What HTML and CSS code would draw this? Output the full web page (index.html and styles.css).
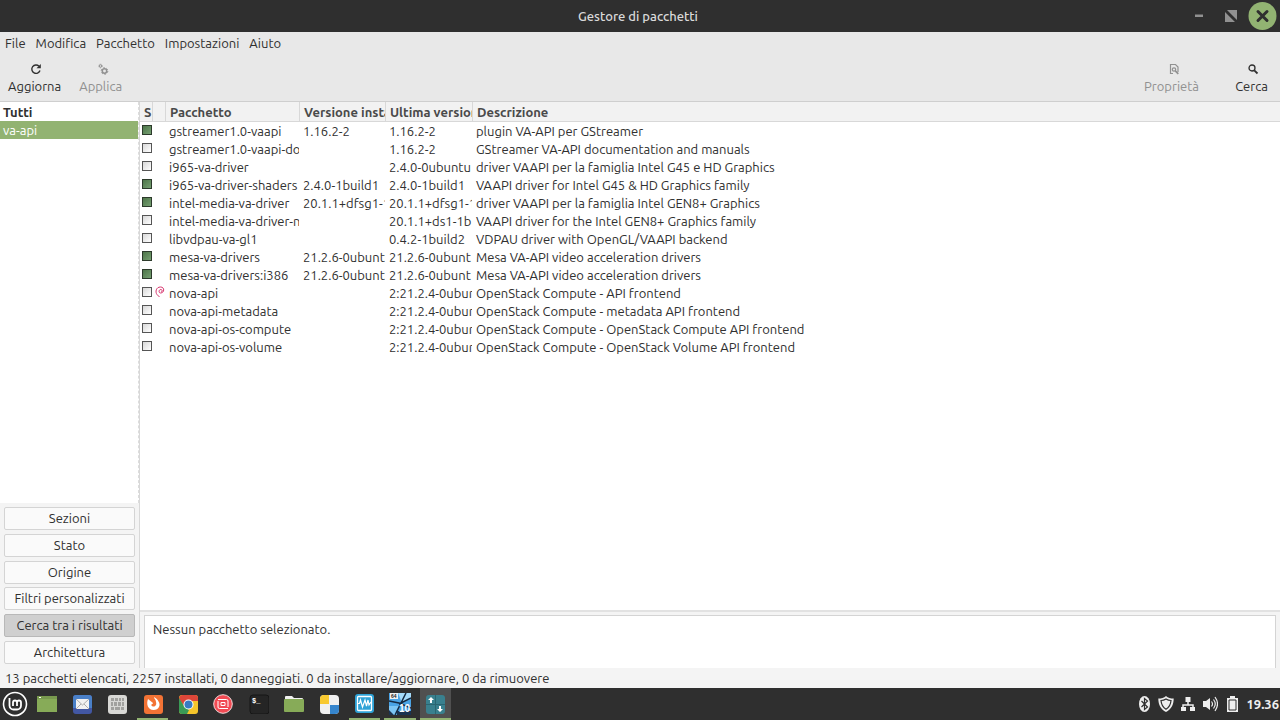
FILE: index.html
```html
<!DOCTYPE html>
<html lang="it">
<head>
    <meta charset="UTF-8">
    <meta name="viewport" content="width=device-width, initial-scale=1.0">
    <title>Gestore di pacchetti</title>
    <link rel="stylesheet" href="styles.css">
</head>
<body>

<header class="titlebar">
    <h1>Gestore di pacchetti</h1>
    <div class="window-buttons">
        <button aria-label="Minimizza"><svg width="32" height="32" viewBox="0 0 32 32"><path d="M11 14.500h8v2.500h-8z" fill="#919191"/></svg></button>
        <button aria-label="Massimizza"><svg width="32" height="32" viewBox="0 0 32 32"><path d="M11 10h10v10zM9 12l10 10H9z" fill="#919191"/></svg></button>
        <button aria-label="Chiudi"><svg width="32" height="32" viewBox="0 0 32 32"><circle cx="14.500" cy="16" r="14" fill="#92b372"/><path d="M10 11.500l9 9m0-9l-9 9" stroke="#2f2f2f" stroke-width="3" stroke-linecap="round"/></svg></button>
    </div>
</header>

<nav class="menubar">
    <button>File</button>
    <button>Modifica</button>
    <button>Pacchetto</button>
    <button>Impostazioni</button>
    <button>Aiuto</button>
</nav>

<div class="toolbar">
    <button>
        <svg width="16" height="16" viewBox="-1 0 16 16"><path d="M12 9.500A4.200 4.200 0 1 1 11 5.200" fill="none" stroke="#303030" stroke-width="1.400"/><path d="M12.800 3v4.300H8.500z" fill="#303030"/></svg>
        Aggiorna
    </button>
    <button disabled>
        <svg width="16" height="16" viewBox="-2 0 16 16" fill="none" stroke="#919191"><circle cx="9.500" cy="10" r="2.200" stroke-width="1.500"/><circle cx="9.500" cy="10" r="3.300" stroke-width="1" stroke-dasharray="1.700 1.750"/><circle cx="5.500" cy="5" r="1.200" stroke-width="1"/><circle cx="5.500" cy="5" r="1.900" stroke-width=".7" stroke-dasharray="1 1"/></svg>
        Applica
    </button>
    <span class="spacer"></span>
    <button class="properties" disabled>
        <svg width="16" height="16" viewBox="-2 0 16 16" fill="none" stroke="#919191" stroke-width="1.200"><path d="M7 12.500H4.500v-9h5l2.500 2.500v5"/><circle cx="8" cy="8.500" r="1.700"/><path d="M9.300 9.800l3 3" stroke-width="1.700"/></svg>
        Proprietà
    </button>
    <button>
        <svg width="16" height="16" viewBox="-1 0 16 16" fill="none" stroke="#303030"><circle cx="7" cy="7" r="3" stroke-width="1.300"/><path d="M9.300 9.300l3.200 3.200" stroke-width="1.800"/></svg>
        Cerca
    </button>
</div>

<main class="content">
    <aside class="sidebar">
        <ul class="filters">
            <li class="all">Tutti</li>
            <li class="selected">va-api</li>
        </ul>
        <div class="views">
            <button>Sezioni</button>
            <button>Stato</button>
            <button>Origine</button>
            <button>Filtri personalizzati</button>
            <button class="active">Cerca tra i risultati</button>
            <button>Architettura</button>
        </div>
    </aside>

    <section class="packages">
        <div class="list">
            <table>
                <colgroup>
                    <col class="col-status">
                    <col class="col-status">
                    <col class="col-name">
                    <col class="col-installed">
                    <col class="col-latest">
                    <col>
                </colgroup>
                <thead>
                    <tr><th>S</th><th></th><th>Pacchetto</th><th>Versione installata</th><th>Ultima versione</th><th>Descrizione</th></tr>
                </thead>
                <tbody>
                    <tr><td><input type="checkbox" aria-label="gstreamer1.0-vaapi" checked></td><td></td><td>gstreamer1.0-vaapi</td><td>1.16.2-2</td><td>1.16.2-2</td><td>plugin VA-API per GStreamer</td></tr>
                    <tr><td><input type="checkbox" aria-label="gstreamer1.0-vaapi-doc"></td><td></td><td>gstreamer1.0-vaapi-do</td><td></td><td>1.16.2-2</td><td>GStreamer VA-API documentation and manuals</td></tr>
                    <tr><td><input type="checkbox" aria-label="i965-va-driver"></td><td></td><td>i965-va-driver</td><td></td><td>2.4.0-0ubuntu</td><td>driver VAAPI per la famiglia Intel G45 e HD Graphics</td></tr>
                    <tr><td><input type="checkbox" aria-label="i965-va-driver-shaders" checked></td><td></td><td>i965-va-driver-shaders</td><td>2.4.0-1build1</td><td>2.4.0-1build1</td><td>VAAPI driver for Intel G45 &amp; HD Graphics family</td></tr>
                    <tr><td><input type="checkbox" aria-label="intel-media-va-driver" checked></td><td></td><td>intel-media-va-driver</td><td>20.1.1+dfsg1-1</td><td>20.1.1+dfsg1-1</td><td>driver VAAPI per la famiglia Intel GEN8+ Graphics</td></tr>
                    <tr><td><input type="checkbox" aria-label="intel-media-va-driver-non-free"></td><td></td><td>intel-media-va-driver-n</td><td></td><td>20.1.1+ds1-1b</td><td>VAAPI driver for the Intel GEN8+ Graphics family</td></tr>
                    <tr><td><input type="checkbox" aria-label="libvdpau-va-gl1"></td><td></td><td>libvdpau-va-gl1</td><td></td><td>0.4.2-1build2</td><td>VDPAU driver with OpenGL/VAAPI backend</td></tr>
                    <tr><td><input type="checkbox" aria-label="mesa-va-drivers" checked></td><td></td><td>mesa-va-drivers</td><td>21.2.6-0ubunt</td><td>21.2.6-0ubunt</td><td>Mesa VA-API video acceleration drivers</td></tr>
                    <tr><td><input type="checkbox" aria-label="mesa-va-drivers:i386" checked></td><td></td><td>mesa-va-drivers:i386</td><td>21.2.6-0ubunt</td><td>21.2.6-0ubunt</td><td>Mesa VA-API video acceleration drivers</td></tr>
                    <tr><td><input type="checkbox" aria-label="nova-api"></td><td><svg width="10" height="12" viewBox="0 0 10 12"><path d="M5.500 7C3.500 7 3.600 3.600 5.800 3.500 7.600 3.500 7.500 6 6 6M5.500 7C9.500 7 10 1 5.500 1 1 1 0 6 2 8.500L4.500 11" fill="none" stroke="#d8366f"/></svg></td><td>nova-api</td><td></td><td>2:21.2.4-0ubun</td><td>OpenStack Compute - API frontend</td></tr>
                    <tr><td><input type="checkbox" aria-label="nova-api-metadata"></td><td></td><td>nova-api-metadata</td><td></td><td>2:21.2.4-0ubun</td><td>OpenStack Compute - metadata API frontend</td></tr>
                    <tr><td><input type="checkbox" aria-label="nova-api-os-compute"></td><td></td><td>nova-api-os-compute</td><td></td><td>2:21.2.4-0ubun</td><td>OpenStack Compute - OpenStack Compute API frontend</td></tr>
                    <tr><td><input type="checkbox" aria-label="nova-api-os-volume"></td><td></td><td>nova-api-os-volume</td><td></td><td>2:21.2.4-0ubun</td><td>OpenStack Compute - OpenStack Volume API frontend</td></tr>
                </tbody>
            </table>
        </div>
        <div class="details">
            <p>Nessun pacchetto selezionato.</p>
        </div>
    </section>
</main>

<footer class="statusbar">13 pacchetti elencati, 2257 installati, 0 danneggiati. 0 da installare/aggiornare, 0 da rimuovere</footer>

<div class="panel">
    <button class="start" aria-label="Menu"><svg width="26" height="26" viewBox="0 0 26 26" fill="none" stroke="#fff"><circle cx="13" cy="13" r="11.500" stroke-width="1.600"/><path d="M7.500 7v7.500a4 4 0 0 0 4 4h3.500a4 4 0 0 0 4-4v-3a2 2 0 0 0-4 0v3.500M15 12v-.5a2 2 0 0 0-4 0v3.500" stroke-width="1.800"/></svg></button>
    <div class="tasks">
        <button aria-label="Mostra scrivania"><svg width="20" height="20" viewBox="0 0 20 20"><path d="M0 2h20v16H0z" fill="#87ab58"/><path d="M0 2h20v3H0z" fill="#78994e"/><path d="M2 3h2v1H2z" fill="#fff"/></svg></button>
        <button aria-label="Posta"><svg width="20" height="20" viewBox="0 0 20 20"><rect x="1" y="1" width="19" height="19" rx="3" fill="#4257a3"/><path d="M1 14V4a3 3 0 0 1 3-3h13a3 3 0 0 1 3 3v10z" fill="#4a80c8"/><path d="M4 5h13v10H4z" fill="#f2f2f2"/><path d="M4 5l6.500 6L17 5M4 15l5-5m8 5l-5-5" fill="none" stroke="#9a9a9a" stroke-width=".8"/></svg></button>
        <button aria-label="Tastiera"><svg width="20" height="20" viewBox="0 0 20 20"><rect x="1" y="1" width="19" height="19" rx="3" fill="#d8d8d5"/><path d="M4 4h3v3H4zm4 0h3v3H8zm4 0h2v3h-2zm3 0h2v3h-2zM4 8h2v4H4zm3 0h3v4H7zm4 0h3v4h-3zm4 0h2v4h-2zM4 13h3v3H4zm4 0h5v3H8zm6 0h3v3h-3z" fill="#a1a19e"/></svg></button>
        <button class="open" aria-label="Firefox"><svg width="20" height="20" viewBox="0 0 20 20"><rect x="1" y="1" width="19" height="19" rx="3" fill="#f37335"/><path d="M5 5c-2 5 0 11 5.500 11S18 11 15.500 7.500C15 6 13 4 11 3c0 2 2 2.500 2 5 1 3-1 5-3 4.500-2-.3-2-2.500-.5-2.500L10 9 7.500 7z" fill="#fff"/></svg></button>
        <button aria-label="Chrome"><svg width="20" height="20" viewBox="0 0 20 20"><rect x="1" y="1" width="19" height="19" rx="3" fill="#f5c52b"/><path d="M1 5a4 4 0 0 1 4-4h12a3 3 0 0 1 3 3v3h-9.500L6 12z" fill="#dd4639"/><path d="M1 4l5 8 5 4-2 4H4a3 3 0 0 1-3-3z" fill="#3b9b56"/><circle cx="10.500" cy="10.500" r="5" fill="#fff"/><circle cx="10.500" cy="10.500" r="4" fill="#397bc3"/></svg></button>
        <button aria-label="Registratore"><svg width="20" height="20" viewBox="0 0 20 20" fill="none" stroke="#fff"><circle cx="10" cy="10" r="9.300" fill="#f14a53" stroke="#f0dada"/><path d="M8 5.500h5.500A1.500 1.500 0 0 1 15 7v6M5 7v6a1.500 1.500 0 0 0 1.500 1.500H12M5 5.500h3M12 14.500h3"/><path d="M8 8.500v3h4v-3z"/></svg></button>
        <button aria-label="Terminale"><svg width="20" height="20" viewBox="0 0 20 20"><rect x="1" y="1" width="19" height="19" rx="3" fill="#252525" stroke="#161616"/><text class="prompt" x="3" y="9">$_</text></svg></button>
        <button aria-label="File"><svg width="20" height="20" viewBox="0 0 20 20"><path d="M1 7V3a1 1 0 0 1 1-1h6l2 2h8a1 1 0 0 1 1 1v3z" fill="#f0f0f0"/><rect y="5" width="20" height="13" rx="1" fill="#87ab58"/></svg></button>
        <button aria-label="Scrivania remota"><svg width="20" height="20" viewBox="0 0 20 20"><rect x="1" y="1" width="19" height="19" rx="4" fill="#f0f0f0"/><path d="M1 10V5a4 4 0 0 1 4-4h5v9z" fill="#f8c930"/><path d="M11 11h9v5a4 4 0 0 1-4 4h-5z" fill="#3585cd"/></svg></button>
        <button class="open" aria-label="Monitor di sistema"><svg width="20" height="20" viewBox="0 0 20 20"><rect width="19" height="19" rx="3" fill="#2fa3d7"/><rect x="2.500" y="2.500" width="14" height="14" rx="1" fill="none" stroke="#fff" stroke-width="1.300"/><path d="M3 9.500h1.500L5.500 6l2 7L10 6l1.500 6L13 6l1 5 2-3" fill="none" stroke="#fff" stroke-width="1.200"/></svg></button>
        <button class="open" aria-label="Macchina virtuale"><svg width="22" height="22" viewBox="0 0 22 22"><path d="M0 0h22v22H0z" fill="#4aa3e4"/><path d="M9 0h13v5l-9 5z" fill="#a5dbfa"/><path d="M0 13h10L6 22H0z" fill="#7cc5f4"/><path d="M0 8l10 2 12 5M17 0L6 22M10 11l12-6" fill="none" stroke="#152a42" stroke-width="1.500"/><path d="M0 17l5 5H0zM8 18h14v4H8z" fill="#1b3350"/><path d="M1 0h8v6H1z" fill="#f0f0f0"/><text class="vm-bits" x="2" y="5">64</text><text class="vm-version" x="10" y="19">10</text></svg></button>
        <button class="open current" aria-label="Gestore di pacchetti"><svg width="20" height="20" viewBox="0 0 20 20"><rect x="1" y="1" width="19" height="19" rx="3" fill="#39808e"/><path d="M10.500 1v19M1 10.500h19" stroke="#2a6672"/><path d="M6 3l3 3H7v3H5V6H3zM15 18l-3-3h2v-3h2v3h2z" fill="#fff"/></svg></button>
    </div>
    <span class="spacer"></span>
    <div class="tray">
        <svg width="16" height="16" viewBox="0 0 16 16"><ellipse cx="8.500" cy="8" rx="5.500" ry="8" fill="#eee"/><path d="M5.500 5l6 6-3 2.500v-11l3 2.500-6 6" fill="none" stroke="#2f2f2f" stroke-width="1.200"/></svg>
        <svg width="16" height="16" viewBox="0 0 16 16"><path d="M8 0c2 2 4.500 2.500 7.700 2.500C15.700 9 13 13.500 8 16 3 13.500.3 9 .3 2.500 3.500 2.500 6 2 8 0z" fill="#eee"/><path d="M8 3c1.500 1 3 1.500 5 1.500-.3 4-2 7-5 8.700-3-1.700-4.700-4.700-5-8.700C5 4.500 6.500 4 8 3z" fill="#eee" stroke="#2f2f2f" stroke-width="1.200"/></svg>
        <svg width="16" height="16" viewBox="0 0 16 16"><path d="M5.500 1h5v5h-5zM1 11h5v4H1zm9 0h5v4h-5z" fill="#eee"/><path d="M8 5v4M3 12V9h10v3" fill="none" stroke="#eee" stroke-width="1.500"/></svg>
        <svg width="16" height="16" viewBox="0 0 16 16"><path d="M1 5h3l4-3v12l-4-3H1z" fill="#eee"/><path d="M9.500 5.500q2 2.500 0 5M11.500 3.500q3.500 4.500 0 9M13 1q5 7 0 14" fill="none" stroke="#eee" stroke-width="1.200"/></svg>
        <svg width="16" height="16" viewBox="0 0 16 16"><path d="M6 0h5v2h3v14H3V2h3z" fill="#eee"/><path d="M5 4h7v10H5z" fill="none" stroke="#2f2f2f"/></svg>
        <time>19.36</time>
    </div>
</div>

</body>
</html>
```
FILE: styles.css
```css
* {
    box-sizing: border-box;
}
body {
    margin: 0;
    height: 100vh;
    display: flex;
    flex-direction: column;
    overflow: hidden;
    background: #f4f4f4;
    color: #303030;
    font-family: Ubuntu, "Noto Sans", sans-serif;
    font-size: 13px;
    line-height: 18px;
}
button {
    margin: 0;
    padding: 0;
    border: none;
    background: none;
    color: inherit;
    font: inherit;
}
svg {
    display: block;
    flex: none;
}
.spacer {
    flex: 1;
}

/* title bar */
.titlebar {
    display: grid;
    grid-template-columns: 96px 1fr 96px;
    align-items: center;
    height: 32px;
    background: #2f2f2f;
    color: #dadada;
}
.titlebar h1 {
    grid-column: 2;
    margin: 0;
    padding-right: 4px;
    font-size: 13px;
    font-weight: 500;
    text-align: center;
}
.window-buttons {
    display: flex;
}

/* menu and toolbar */
.menubar {
    display: flex;
    gap: 10px;
    padding: 2px 5px 5px;
    background: #e8e8e8;
}
.toolbar {
    display: flex;
    gap: 2px;
    padding: 4px 0 5px;
    height: 45px;
    border-bottom: 1px solid #cfcfcf;
    background: #e8e8e8;
}
.toolbar button {
    display: flex;
    flex-direction: column;
    align-items: center;
    min-width: 57px;
    padding: 0 8px;
}
.toolbar button:disabled {
    color: #919191;
}
.toolbar .properties {
    margin-right: 14px;
}

/* main area */
.content {
    flex: 1;
    display: flex;
    min-height: 0;
}
.sidebar {
    display: flex;
    flex-direction: column;
    width: 140px;
    border-right: 1px solid #d8d8d8;
}
.filters {
    flex: 1;
    margin: 0;
    padding: 0;
    list-style: none;
    background: #fff;
    border-right: 1px dashed #dcdcdc;
}
.filters li {
    padding: 0 3px;
}
.filters .all {
    padding-top: 1px;
    font-weight: bold;
}
.filters .selected {
    background: #92b372;
    color: #fff;
}
.views {
    display: flex;
    flex-direction: column;
    justify-content: space-between;
    height: 165px;
    padding: 4px;
}
.views button {
    height: 23px;
    border: 1px solid #d4d4d4;
    border-radius: 2px;
    background: #fafafa;
    line-height: 21px;
}
.views .active {
    border-color: #b8b8b8;
    background: #cfcfcf;
}
.packages {
    flex: 1;
    display: flex;
    flex-direction: column;
    min-width: 0;
}
.list {
    flex: 1;
    background: #fff;
    border-bottom: 2px solid #e2e2e2;
}
table {
    width: 100%;
    table-layout: fixed;
    border-spacing: 0;
}
.col-status {
    width: 13px;
}
.col-name {
    width: 134px;
}
.col-installed {
    width: 86px;
}
.col-latest {
    width: 87px;
}
th {
    height: 20px;
    padding: 0 0 0 4px;
    overflow: hidden;
    border-right: 1px solid #d8d8d8;
    border-bottom: 1px solid #d8d8d8;
    background: #f2f2f2;
    color: #4a4a4a;
    text-align: left;
    white-space: nowrap;
}
th:last-child {
    border-right: none;
}
td {
    height: 18px;
    padding: 0 0 0 3px;
    overflow: hidden;
    border-right: 1px solid transparent;
    white-space: nowrap;
}
td:nth-child(-n+2) {
    padding: 0 0 2px 2px;
    border: none;
}
input[type="checkbox"] {
    appearance: none;
    display: block;
    width: 10px;
    height: 10px;
    margin: 0;
    border: 1px solid #555;
    background: linear-gradient(135deg, #d8d8d8, #fff);
}
input[type="checkbox"]:checked {
    border-color: #2c3a2b;
    background: linear-gradient(135deg, #4d7549, #76a072);
}
.details {
    height: 56px;
    padding: 3px 4px 0;
}
.details p {
    height: 100%;
    margin: 0;
    padding: 4px 8px;
    border: 1px solid #d4d4d4;
    border-bottom: none;
    background: #fff;
}
.statusbar {
    height: 20px;
    padding: 1px 5px;
}

/* bottom panel */
.panel {
    display: flex;
    height: 32px;
    background: #2f2f2f;
    color: #eee;
}
.start {
    width: 31px;
    padding-left: 2px;
}
.tasks {
    display: grid;
    grid-template-columns: repeat(12, 1fr);
    gap: 4px;
    flex: 0 1 420px;
}
.tasks button {
    display: flex;
    align-items: center;
    justify-content: center;
}
.tasks .open {
    box-shadow: inset 0 -2px #92b372;
}
.tasks .current {
    background: #505050;
}
.prompt {
    fill: #fff;
    font: bold 7px "Liberation Mono", monospace;
}
.vm-bits {
    fill: #222;
    font: bold 5px "Liberation Sans", sans-serif;
}
.vm-version {
    fill: #fff;
    font: bold 10px "Liberation Sans", sans-serif;
}
.tray {
    display: flex;
    align-items: center;
    gap: 6px;
    padding-right: 1px;
}
.tray time {
    font-weight: bold;
}
```
